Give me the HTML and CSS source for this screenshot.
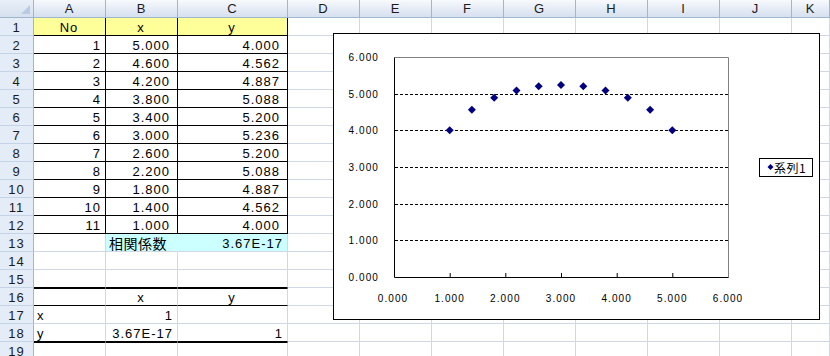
FILE: index.html
```html
<!DOCTYPE html>
<html lang="ja">
<head>
    <meta charset="UTF-8">
    <title>相関係数 - Sheet1</title>
    <link rel="stylesheet" href="styles.css">
</head>
<body>
    <div class="sheet">
        <div class="row head">
            <div class="corner"></div><div class="ch">A</div><div class="ch">B</div><div class="ch">C</div><div class="ch">D</div><div class="ch">E</div><div class="ch">F</div><div class="ch">G</div><div class="ch">H</div><div class="ch">I</div><div class="ch">J</div><div class="ch">K</div>
        </div>
        <div class="row">
            <div class="rh">1</div><div class="c box yel mid">No</div><div class="c box yel mid">x</div><div class="c box yel mid">y</div><div class="c"></div><div class="c"></div><div class="c"></div><div class="c"></div><div class="c"></div><div class="c"></div><div class="c"></div><div class="c"></div>
        </div>
        <div class="row">
            <div class="rh">2</div><div class="c box num">1</div><div class="c box num pad">5.000</div><div class="c box num pad">4.000</div><div class="c"></div><div class="c"></div><div class="c"></div><div class="c"></div><div class="c"></div><div class="c"></div><div class="c"></div><div class="c"></div>
        </div>
        <div class="row">
            <div class="rh">3</div><div class="c box num">2</div><div class="c box num pad">4.600</div><div class="c box num pad">4.562</div><div class="c"></div><div class="c"></div><div class="c"></div><div class="c"></div><div class="c"></div><div class="c"></div><div class="c"></div><div class="c"></div>
        </div>
        <div class="row">
            <div class="rh">4</div><div class="c box num">3</div><div class="c box num pad">4.200</div><div class="c box num pad">4.887</div><div class="c"></div><div class="c"></div><div class="c"></div><div class="c"></div><div class="c"></div><div class="c"></div><div class="c"></div><div class="c"></div>
        </div>
        <div class="row">
            <div class="rh">5</div><div class="c box num">4</div><div class="c box num pad">3.800</div><div class="c box num pad">5.088</div><div class="c"></div><div class="c"></div><div class="c"></div><div class="c"></div><div class="c"></div><div class="c"></div><div class="c"></div><div class="c"></div>
        </div>
        <div class="row">
            <div class="rh">6</div><div class="c box num">5</div><div class="c box num pad">3.400</div><div class="c box num pad">5.200</div><div class="c"></div><div class="c"></div><div class="c"></div><div class="c"></div><div class="c"></div><div class="c"></div><div class="c"></div><div class="c"></div>
        </div>
        <div class="row">
            <div class="rh">7</div><div class="c box num">6</div><div class="c box num pad">3.000</div><div class="c box num pad">5.236</div><div class="c"></div><div class="c"></div><div class="c"></div><div class="c"></div><div class="c"></div><div class="c"></div><div class="c"></div><div class="c"></div>
        </div>
        <div class="row">
            <div class="rh">8</div><div class="c box num">7</div><div class="c box num pad">2.600</div><div class="c box num pad">5.200</div><div class="c"></div><div class="c"></div><div class="c"></div><div class="c"></div><div class="c"></div><div class="c"></div><div class="c"></div><div class="c"></div>
        </div>
        <div class="row">
            <div class="rh">9</div><div class="c box num">8</div><div class="c box num pad">2.200</div><div class="c box num pad">5.088</div><div class="c"></div><div class="c"></div><div class="c"></div><div class="c"></div><div class="c"></div><div class="c"></div><div class="c"></div><div class="c"></div>
        </div>
        <div class="row">
            <div class="rh">10</div><div class="c box num">9</div><div class="c box num pad">1.800</div><div class="c box num pad">4.887</div><div class="c"></div><div class="c"></div><div class="c"></div><div class="c"></div><div class="c"></div><div class="c"></div><div class="c"></div><div class="c"></div>
        </div>
        <div class="row">
            <div class="rh">11</div><div class="c box num">10</div><div class="c box num pad">1.400</div><div class="c box num pad">4.562</div><div class="c"></div><div class="c"></div><div class="c"></div><div class="c"></div><div class="c"></div><div class="c"></div><div class="c"></div><div class="c"></div>
        </div>
        <div class="row">
            <div class="rh">12</div><div class="c box num">11</div><div class="c box num pad">1.000</div><div class="c box num pad">4.000</div><div class="c"></div><div class="c"></div><div class="c"></div><div class="c"></div><div class="c"></div><div class="c"></div><div class="c"></div><div class="c"></div>
        </div>
        <div class="row">
            <div class="rh">13</div><div class="c"></div><div class="c cya cya-join"><span class="jp">相関係数</span></div><div class="c cya num">3.67E-17</div><div class="c"></div><div class="c"></div><div class="c"></div><div class="c"></div><div class="c"></div><div class="c"></div><div class="c"></div><div class="c"></div>
        </div>
        <div class="row">
            <div class="rh">14</div><div class="c"></div><div class="c"></div><div class="c"></div><div class="c"></div><div class="c"></div><div class="c"></div><div class="c"></div><div class="c"></div><div class="c"></div><div class="c"></div><div class="c"></div>
        </div>
        <div class="row">
            <div class="rh">15</div><div class="c bb"></div><div class="c bb"></div><div class="c bb"></div><div class="c"></div><div class="c"></div><div class="c"></div><div class="c"></div><div class="c"></div><div class="c"></div><div class="c"></div><div class="c"></div>
        </div>
        <div class="row">
            <div class="rh">16</div><div class="c bt bb"></div><div class="c bt bb mid">x</div><div class="c bt bb mid">y</div><div class="c"></div><div class="c"></div><div class="c"></div><div class="c"></div><div class="c"></div><div class="c"></div><div class="c"></div><div class="c"></div>
        </div>
        <div class="row">
            <div class="rh">17</div><div class="c">x</div><div class="c num">1</div><div class="c"></div><div class="c"></div><div class="c"></div><div class="c"></div><div class="c"></div><div class="c"></div><div class="c"></div><div class="c"></div><div class="c"></div>
        </div>
        <div class="row">
            <div class="rh">18</div><div class="c bb">y</div><div class="c bb num">3.67E-17</div><div class="c bb num">1</div><div class="c"></div><div class="c"></div><div class="c"></div><div class="c"></div><div class="c"></div><div class="c"></div><div class="c"></div><div class="c"></div>
        </div>
        <div class="row">
            <div class="rh">19</div><div class="c bt"></div><div class="c bt"></div><div class="c bt"></div><div class="c"></div><div class="c"></div><div class="c"></div><div class="c"></div><div class="c"></div><div class="c"></div><div class="c"></div><div class="c"></div>
        </div>

        <!-- 散布図 -->
        <div class="chart">
            <svg class="plot" width="485" height="285" viewBox="0 0 485 285">
                <defs>
                    <path id="mk" d="M0 -4 L4 0 L0 4 L-4 0 Z" fill="#000080"/>
                </defs>
                <g class="gridlines" stroke="#000" stroke-width="1" stroke-dasharray="3 2">
                    <line x1="61" y1="60.5" x2="394" y2="60.5"/>
                    <line x1="61" y1="96.5" x2="394" y2="96.5"/>
                    <line x1="61" y1="133.5" x2="394" y2="133.5"/>
                    <line x1="61" y1="170.5" x2="394" y2="170.5"/>
                    <line x1="61" y1="206.5" x2="394" y2="206.5"/>
                </g>
                <path d="M60.5 23.5 H394.5 V243.5" fill="none" stroke="#808080"/>
                <path d="M60.5 23.5 V243.5 H394.5" fill="none" stroke="#000"/>
                <g stroke="#000">
                    <line x1="116.2" y1="239" x2="116.2" y2="243"/>
                    <line x1="171.8" y1="239" x2="171.8" y2="243"/>
                    <line x1="227.5" y1="239" x2="227.5" y2="243"/>
                    <line x1="283.2" y1="239" x2="283.2" y2="243"/>
                    <line x1="338.8" y1="239" x2="338.8" y2="243"/>
                </g>
                <g class="ylab" text-anchor="end">
                    <text x="45" y="27">6.000</text>
                    <text x="45" y="64">5.000</text>
                    <text x="45" y="100">4.000</text>
                    <text x="45" y="137">3.000</text>
                    <text x="45" y="174">2.000</text>
                    <text x="45" y="210">1.000</text>
                    <text x="45" y="247">0.000</text>
                </g>
                <g class="xlab" text-anchor="middle">
                    <text x="59" y="268">0.000</text>
                    <text x="115.7" y="268">1.000</text>
                    <text x="171.3" y="268">2.000</text>
                    <text x="227" y="268">3.000</text>
                    <text x="282.7" y="268">4.000</text>
                    <text x="338.3" y="268">5.000</text>
                    <text x="394" y="268">6.000</text>
                </g>
                <g class="points">
                    <use href="#mk" x="115.7" y="96.3"/>
                    <use href="#mk" x="137.9" y="75.7"/>
                    <use href="#mk" x="160.2" y="63.8"/>
                    <use href="#mk" x="182.5" y="56.4"/>
                    <use href="#mk" x="204.7" y="52.3"/>
                    <use href="#mk" x="227" y="51"/>
                    <use href="#mk" x="249.3" y="52.3"/>
                    <use href="#mk" x="271.5" y="56.4"/>
                    <use href="#mk" x="293.8" y="63.8"/>
                    <use href="#mk" x="316.1" y="75.7"/>
                    <use href="#mk" x="338.3" y="96.3"/>
                </g>
                <rect x="425.5" y="124.5" width="53" height="18" fill="#fff" stroke="#000"/>
                <path d="M436.5 130 L439.5 133 L436.5 136 L433.5 133 Z" fill="#000080"/>
                <text class="legend" x="440" y="138.5">系列1</text>
            </svg>
        </div>
    </div>
</body>
</html>
```

FILE: styles.css
```css
body {
    margin: 0;
    background-color: #fff;
    overflow: hidden;
}

.sheet {
    position: relative;
    width: 830px;
    height: 356px;
    overflow: hidden;
    font-family: "Liberation Sans", Arial, "Noto Sans CJK JP", sans-serif;
    font-size: 13px;
    color: #000;
}

.row {
    display: grid;
    grid-template-columns: 34px 72px 72px 110px repeat(7, 72px) 1fr;
    height: 18px;
}

.row > div {
    box-sizing: border-box;
    height: 18px;
    white-space: nowrap;
    overflow: hidden;
}

/* 見出し */
.corner {
    position: relative;
    background: linear-gradient(#e9eff8, #d5e0ef);
    border-right: 1px solid #9eb6ce;
    border-bottom: 1px solid #9eb6ce;
}

.corner::after {
    content: "";
    position: absolute;
    right: 3px;
    bottom: 3px;
    border-left: 9px solid transparent;
    border-bottom: 9px solid #b9cbe0;
}

.ch {
    background: linear-gradient(#f7f9fd, #e3eaf5 60%, #d6e0ef);
    border-right: 1px solid #9eb6ce;
    border-bottom: 1px solid #9eb6ce;
    text-align: center;
    line-height: 17px;
    letter-spacing: 1px;
    color: #1b1b1b;
}

.rh {
    background-color: #e4ecf7;
    border-right: 1px solid #9eb6ce;
    border-bottom: 1px solid #c5d3e6;
    text-align: center;
    padding-top: 2px;
    line-height: 15px;
    letter-spacing: 1px;
    color: #1b1b1b;
}

/* セル */
.c {
    border-right: 1px solid #d0d7e5;
    border-bottom: 1px solid #d0d7e5;
    padding: 2px 4px 0 3px;
    line-height: 15px;
    letter-spacing: 1px;
}

.num {
    text-align: right;
}

.mid {
    text-align: center;
}

.pad {
    padding-right: 7px;
}

.box {
    border-right-color: #000;
    border-bottom-color: #000;
}

.yel {
    background-color: #ffff99;
}

.cya {
    background-color: #ccffff;
}

.cya-join {
    border-right-color: #ccffff;
}

.jp {
    font-family: "Noto Sans CJK JP", sans-serif;
    font-size: 14px;
    letter-spacing: 0.5px;
    line-height: 15px;
}

.bb {
    border-bottom-color: #000;
}

.bt {
    border-top: 1px solid #000;
    padding-top: 1px;
}

/* グラフ */
.chart {
    position: absolute;
    left: 333px;
    top: 33px;
    width: 487px;
    height: 287px;
    box-sizing: border-box;
    border: 1px solid #000;
    background-color: #fff;
}

.plot {
    display: block;
    font-family: "Liberation Sans", Arial, sans-serif;
    font-size: 10px;
    letter-spacing: 1.1px;
}

.plot text {
    fill: #000;
}

.legend {
    font-family: "Noto Sans CJK JP", sans-serif;
    font-size: 12px;
    letter-spacing: 0.5px;
}
```
